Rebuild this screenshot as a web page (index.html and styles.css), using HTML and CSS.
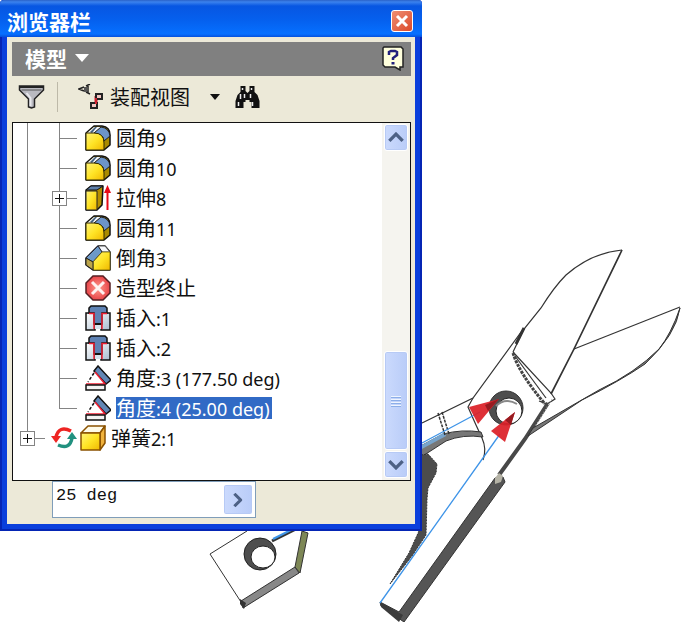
FILE: index.html
```html
<!DOCTYPE html>
<html lang="zh-CN">
<head>
<meta charset="utf-8">
<meta name="viewport" content="width=device-width, initial-scale=1">
<title>浏览器栏</title>
<link rel="stylesheet" href="styles.css">
</head>
<body>
<svg class="defs" width="0" height="0" aria-hidden="true">
  <defs>
    <linearGradient id="gold" x1="0" y1="0" x2="1" y2="1"><stop offset="0" stop-color="#fff37a"/><stop offset=".5" stop-color="#ffe426"/><stop offset="1" stop-color="#f0b800"/></linearGradient>
    <linearGradient id="steel" x1="0" y1="0" x2="1" y2="1"><stop offset="0" stop-color="#fff"/><stop offset="1" stop-color="#a9bdd0"/></linearGradient>
    <radialGradient id="red"><stop offset="0" stop-color="#ff9a8c"/><stop offset="1" stop-color="#e8464a"/></radialGradient>
    <symbol id="fillet" viewBox="0 0 26 26">
      <path d="M1 8 9 1h8q8 1 8 9v10l-6 5H1Z" fill="#a98a00" stroke="#111" stroke-width="1.5" stroke-linejoin="round"/>
      <path d="M2 8 9 2h7L9 8Z" fill="#f4f8fc"/>
      <path d="M5 7 10 2h2L7 8Z" fill="#47627f"/>
      <path d="M9 8 16 2q8 1 9 9l-6 5q0-7-10-8Z" fill="#6c94c8" stroke="#222" stroke-width="1"/>
      <path d="M1 8h8q10 0 10 10v7H1Z" fill="url(#gold)" stroke="#332b00" stroke-width="1"/>
    </symbol>
    <symbol id="extrude" viewBox="0 0 26 26">
      <path d="M1 5 6 1h12l-1 19-5 5H1Z" fill="#b58f00" stroke="#111" stroke-width="1.5" stroke-linejoin="round"/>
      <path d="M1 5 6 1h12l-6 4Z" fill="#5e80aa" stroke="#111"/>
      <path d="M1 6h11v19H1Z" fill="url(#gold)" stroke="#222"/>
      <path d="M22.500 25V5" stroke="#e80b16" stroke-width="2"/><path d="m19 8 3.500-8L26 8Z" fill="#e80b16"/>
    </symbol>
    <symbol id="chamfer" viewBox="0 0 26 26">
      <path d="M1 13 13 1h7l5 6v18H8l-7-5Z" fill="#c7a000" stroke="#111" stroke-width="1.500" stroke-linejoin="round"/>
      <path d="M13 1h7l5 6h-8Z" fill="#f6f8fb" stroke="#555"/>
      <path d="m1 13 12-12 4 6L8 17Z" fill="#6d99c7" stroke="#223" />
      <path d="m8 17 9-10h8v18H8Z" fill="url(#gold)" stroke="#5f5200" stroke-width=".7"/>
      <path d="m1 13 7 4v8l-7-5Z" fill="#bca54a" stroke="#222"/>
    </symbol>
    <symbol id="stop" viewBox="0 0 26 26">
      <path d="M8 1h10l7 7v10l-7 7H8l-7-7V8Z" fill="url(#red)" stroke="#552023" stroke-width="1.500"/>
      <path d="m7 7 12 12M19 7 7 19" stroke="#fff" stroke-width="3" opacity=".9"/>
    </symbol>
    <symbol id="insert" viewBox="0 0 26 26">
      <path d="M1 8h9v17H1ZM16 8h9v17h-9Z" fill="url(#steel)" stroke="#111" stroke-width="1.500"/>
      <path d="M4 3 6 1h14l2 2v5h-5v11H9V8H4Z" fill="#5e82b4" stroke="#111" stroke-width="1.500"/>
      <path d="M4 8.500h5V24M22 8.500h-5V24" fill="none" stroke="#ef2035" stroke-width="1.500"/>
      <path d="M10 20h6v4h-6Z" fill="#d4e2ed"/><path d="M10 19h6" stroke="#111" stroke-width="2"/>
    </symbol>
    <symbol id="angle" viewBox="0 0 26 26">
      <path d="m9 6 4-5 13 14-5 4Z" fill="#6287b5" stroke="#111" stroke-width="1.500"/>
      <path d="M10 7 2 19h17Z" fill="#fff"/><path d="m9 8-6 9" stroke="#111" stroke-width="1.500" stroke-dasharray="3 2"/>
      <path d="m10 7 10 12H1" fill="none" stroke="#ef2035" stroke-width="1.500"/>
      <path d="M1 20h19v5H1Z" fill="#f3f3f3" stroke="#111" stroke-width="1.500"/>
    </symbol>
    <symbol id="cube" viewBox="0 0 26 26">
      <path d="m1 8 7-7h17l-5 7Z" fill="#fffbe8" stroke="#8a5200" stroke-width="1.500" stroke-linejoin="round"/>
      <path d="m20 8 5-7v17l-5 7Z" fill="#f0b23c" stroke="#8a5200" stroke-width="1.500" stroke-linejoin="round"/>
      <path d="M1 8h19v17H1Z" fill="url(#gold)" stroke="#8a5200" stroke-width="1.500" stroke-linejoin="round"/>
    </symbol>
    <symbol id="cycle" viewBox="0 0 26 22">
      <path d="M20 4Q8-2 5 10" fill="none" stroke="#ee2422" stroke-width="3.500"/><path d="m0 9 10 0-5 7Z" fill="#ee2422"/>
      <path d="M7 18q12 5 14-7" fill="none" stroke="#21917f" stroke-width="3.500"/><path d="m16 12 5-7 5 7Z" fill="#21917f"/>
    </symbol>
    <symbol id="chevron" viewBox="0 0 12 8"><path d="m1 6.500 5-5 5 5" fill="none" stroke="#4d6185" stroke-width="2.500"/></symbol>
  </defs>
</svg>

<main class="workspace">
  <svg class="model" viewBox="0 0 681 622" role="img" aria-label="剪刀模型">
    <g fill="none" stroke="#333" stroke-width="1.200">
      <path d="M622 250q-31 3-56 25-12 12-25 33l-17 21-11 23"/>
      <path d="M622 250 574 349l-23 45" stroke-width="1.700"/>
      <path d="m574 349 106-42"/>
      <path d="m524 328-51 70-51 25" />
      <path d="m524 328-8 16" stroke-width="3"/>
      <path d="m513 352 38 41 4 6-8 5-8-3"/>
      <path d="m515 356 31 42" />
      <path d="M513 353q6 20 32 51" stroke-width="3" stroke="#444" stroke-dasharray="3 1"/>
      <path d="m548 403-23 36-26 36" stroke-width="4" stroke="#484848"/>
      <path d="m552 399-20 33" stroke="#bbb" stroke-dasharray="1 2"/>
      <path d="m473 398-5 9 8 18 6 13q5 11 1 22"/>
    </g>
    <path d="M680 308q-4 27-35 56-25 17-63 36l-54 36 5-8 66-38q36-17 60-41 12-15 21-41Z" fill="#777" stroke="#333"/>
    <path d="m495 478 8-1 2 5-101 140-23-16-1-4 19 10Z" fill="#555" stroke="#333"/>
    <path d="m380 602 1 5 18 15 4-7Z" fill="#3b3b3b"/>
    <path d="m495 478 4-5 4 3-2 6-6 2Z" fill="#b5b3a6"/>
    <path d="m415 449 28-15q19-5 38-2l2 5q-20-3-37 4l-31 20Z" fill="#777" stroke="#333"/>
    <path d="m420 446 25-14 1 4-26 14Z" fill="#77a4cc"/>
    <path d="m438 413 7 22m-3-23 7 22" stroke="#333" stroke-width="1.500" stroke-dasharray="3 1"/>
    <path d="m421 455 7-1 9 10-1 9-8 15-1 11-1 36-14 21-22 28 19-31 10-22Z" fill="#4c4c4c" stroke="#333" stroke-dasharray="2 1"/>
    <path d="m422 443 58-31M380 603l120-169" stroke="#3e94e8" stroke-width="1.300" fill="none"/>
    <ellipse cx="506" cy="408" rx="17" ry="17" fill="#4e4e4e" stroke="#333"/>
    <ellipse cx="509" cy="411" rx="13" ry="13" fill="#fff" stroke="#222"/>
    <path d="M496 406q9-9 21-2" fill="none" stroke="#888" stroke-width="2"/>
    <path d="m469 407 30-8-21 25ZM515 412l-24 19 14 11Z" fill="#dc2028" opacity=".93"/>
    <path d="m499 399-14 6 3 6ZM515 412l-10 8 6 5Z" fill="#981b20"/>
    <path d="m247 531-37 23 31 48" fill="none" stroke="#333"/>
    <path d="m241 601 54-34 4 6-56 35Z" fill="#888" stroke="#333"/>
    <path d="m240 599 6 4-2 6-4-5Z" fill="#333"/>
    <path d="m302 531 6 2-8 40-5-6Z" fill="#7d8756" stroke="#333"/>
    <ellipse cx="260" cy="554" rx="16" ry="16" fill="#4e4e4e" stroke="#222"/>
    <ellipse cx="263" cy="557" rx="12" ry="11" fill="#fff" stroke="#222"/>
    <path d="m272 541 24-12" stroke="#333" stroke-width="3"/><path d="m273 539 20-10" stroke="#3e94e8" stroke-width="2"/>
  </svg>

  <section class="window" aria-labelledby="title">
    <header class="titlebar">
      <h1 id="title">浏览器栏</h1>
      <button class="close" type="button" aria-label="关闭"><svg viewBox="0 0 20 20"><path d="m5 5 10 10M15 5 5 15" stroke="#fff" stroke-width="3"/></svg></button>
    </header>
    <div class="content">
      <div class="modelbar">
        <span class="picker picker-model">
          <select aria-label="面板"><option>模型</option></select>
          <svg viewBox="0 0 14 8"><path d="M0 0h14L7 8Z" fill="#fff"/></svg>
        </span>
        <button class="help" type="button" aria-label="帮助"><svg viewBox="0 0 22 25"><path d="M2 1h17l2 2v18h-3v3l-5-3H3l-2-2V2Z" fill="#ffffdc" stroke="#222" stroke-width="1.500"/><path d="M7 9V6l2-1h4l2 1v3l-4 3v2" fill="none" stroke="#22207c" stroke-width="2.500"/><path d="M9.500 16h3v2.500h-3Z" fill="#22207c"/></svg></button>
      </div>
      <div class="toolbar">
        <button class="tool" type="button" aria-label="过滤器"><svg viewBox="0 0 26 24"><path d="M1 1h24v4l-9 9v8l-3 1-3-1v-8L1 5Z" fill="#b9b9c0" stroke="#222" stroke-width="1.500"/><path d="M1 2h24" stroke="#222" stroke-width="2"/><path d="M3 5h20" stroke="#555" stroke-width="1"/><path d="m8 8 4 5v8" fill="none" stroke="#e8e8ec" stroke-width="2"/></svg></button>
        <span class="separator"></span>
        <svg class="view-icon" viewBox="0 0 26 26" aria-hidden="true"><path d="M12 0 8 2M6 3 1 5l5 2m2 1 4 2M10 2v7" fill="none" stroke="#222" stroke-width="1.500"/><path d="M6 3h3v5H6Z" fill="#555"/><path d="M18 12v10" fill="none" stroke="#cf2030" stroke-width="3"/><path d="M18 10h6v5h-6ZM13 19h6v5h-6Z" fill="#f2c7c3" stroke="#222" stroke-width="2"/><path d="M18 14v6" stroke="#cf2030" stroke-width="2"/></svg>
        <span class="picker picker-view">
          <select aria-label="视图"><option>装配视图</option></select>
          <svg viewBox="0 0 10 6"><path d="M0 0h10L5 6Z" fill="#111"/></svg>
        </span>
        <button class="tool" type="button" aria-label="查找"><svg viewBox="0 0 26 24"><path d="M6 1h5v5l2 2 2-2V1h5v6l3 3 2 6v7h-8v-6h-2v-2h-4v2H9v6H1v-7l2-6 3-3Z" fill="#111"/><path d="M8 3v2M17 3v2M6 9v5M10 9v4M16 9v4M4 17v4M18 17v4" stroke="#eee" stroke-width="1.500"/></svg></button>
      </div>
      <div class="browser">
        <ul class="tree" role="tree">
          <li role="treeitem"><span class="guide"></span><span class="branch"></span><svg><use href="#fillet"/></svg><span class="label">圆角<span class="latin">9</span></span></li>
          <li role="treeitem"><span class="guide"></span><span class="branch"></span><svg><use href="#fillet"/></svg><span class="label">圆角<span class="latin">10</span></span></li>
          <li role="treeitem" aria-expanded="false"><span class="guide"></span><span class="branch"><button class="expand" type="button" aria-label="展开"></button></span><svg><use href="#extrude"/></svg><span class="label">拉伸<span class="latin">8</span></span></li>
          <li role="treeitem"><span class="guide"></span><span class="branch"></span><svg><use href="#fillet"/></svg><span class="label">圆角<span class="latin">11</span></span></li>
          <li role="treeitem"><span class="guide"></span><span class="branch"></span><svg><use href="#chamfer"/></svg><span class="label">倒角<span class="latin">3</span></span></li>
          <li role="treeitem"><span class="guide"></span><span class="branch"></span><svg><use href="#stop"/></svg><span class="label">造型终止</span></li>
          <li role="treeitem"><span class="guide"></span><span class="branch"></span><svg><use href="#insert"/></svg><span class="label">插入<span class="latin">:1</span></span></li>
          <li role="treeitem"><span class="guide"></span><span class="branch"></span><svg><use href="#insert"/></svg><span class="label">插入<span class="latin">:2</span></span></li>
          <li role="treeitem"><span class="guide"></span><span class="branch"></span><svg><use href="#angle"/></svg><span class="label">角度<span class="latin">:3 (177.50 deg)</span></span></li>
          <li role="treeitem" aria-selected="true"><span class="guide"></span><span class="branch last"></span><svg><use href="#angle"/></svg><span class="label selected">角度<span class="latin">:4 (25.00 deg)</span></span></li>
          <li role="treeitem" aria-expanded="false"><span class="branch root last"><button class="expand" type="button" aria-label="展开"></button></span><svg><use href="#cycle"/></svg><svg><use href="#cube"/></svg><span class="label">弹簧<span class="latin">2:1</span></span></li>
        </ul>
        <div class="scrollbar">
          <button type="button" aria-label="向上滚动"><svg><use href="#chevron"/></svg></button>
          <div class="track"><div class="thumb"><i></i><i></i><i></i><i></i></div></div>
          <button class="down" type="button" aria-label="向下滚动"><svg><use href="#chevron"/></svg></button>
        </div>
      </div>
      <form class="value">
        <input type="text" value="25 deg" aria-label="角度值">
        <button type="button" aria-label="更多"><svg><use href="#chevron"/></svg></button>
      </form>
    </div>
  </section>
</main>
</body>
</html>
```
FILE: styles.css
```css
* { box-sizing: border-box; }

body {
  margin: 0;
  background: #fff;
  color: #111;
  font: 20px/24px "Noto Sans CJK SC", sans-serif;
}

button, select, input { margin: 0; padding: 0; border: 0; font: inherit; color: inherit; }
button { display: flex; align-items: center; justify-content: center; background: none; }
.defs { position: absolute; }

.workspace { display: grid; min-height: 100vh; overflow: hidden; }
.model, .window { grid-area: 1 / 1; align-self: start; }
.model { display: block; width: 100%; height: auto; }

.window {
  z-index: 1;
  width: 62%;
  min-width: 320px;
  padding: 0 7px 7px;
  border-radius: 4px 4px 0 0;
  background: #0a3fdc;
  box-shadow: inset 2px 0 #0525b4, inset -2px -2px #0525b4;
}

.titlebar {
  display: flex;
  align-items: center;
  justify-content: space-between;
  height: 37px;
  margin: 0 -7px;
  padding: 4px 9px 0 7px;
  border-radius: 4px 4px 0 0;
  background: linear-gradient(#2a62c8, #3b82ee 2px, #0756e2 6px, #0560ee 20px, #0670ff 34px, #0450dc);
}

h1 { margin: 0; color: #fff; font-size: 21px; line-height: 24px; font-weight: 700; }

.close {
  width: 22px;
  height: 22px;
  border: 1px solid #fff;
  border-radius: 3px;
  background: linear-gradient(135deg, #ee8e72, #dc4a2b);
}
.close svg { width: 20px; height: 20px; }

.content { padding: 5px 4px 6px 5px; background: #ece9d8; }

.modelbar {
  display: flex;
  align-items: center;
  justify-content: space-between;
  height: 34px;
  padding: 0 7px 2px 13px;
  background: #808080;
}

.picker { position: relative; display: flex; align-items: center; }
.picker select { width: 100%; appearance: none; background: transparent; outline: 0; }
.picker svg { position: absolute; right: 0; pointer-events: none; }
.picker-model { width: 64px; color: #fff; font-size: 21px; font-weight: 700; }
.picker-model svg { width: 14px; height: 8px; }
.picker-view { width: 110px; margin: 0 14px 0 6px; }
.picker-view svg { width: 10px; height: 6px; }
.help svg { width: 22px; height: 25px; }

.toolbar { display: flex; align-items: center; height: 46px; padding: 0 6px 4px; }
.tool svg { display: block; width: 27px; height: 24px; }
.separator { width: 1px; height: 30px; margin: 0 20px 0 12px; background: #bdb9a8; }
.view-icon { width: 26px; height: 26px; }

.browser { display: flex; min-height: 359px; border: 1px solid #111; background: #fff; }
.tree { flex: 1; min-width: 0; margin: 0; padding: 0; list-style: none; overflow: hidden; }
.tree li { display: flex; align-items: center; height: 30px; white-space: nowrap; }
.tree svg { flex: none; width: 26px; height: 26px; }
.guide { flex: none; align-self: stretch; width: 32px; margin-left: 14px; border-left: 1px solid #848484; }

.branch { position: relative; flex: none; align-self: stretch; width: 26px; }
.branch::before {
  content: "";
  position: absolute;
  inset: 0 auto 0 0;
  border-left: 1px solid #848484;
}
.branch.last::before { bottom: 15px; }
.branch::after {
  content: "";
  position: absolute;
  top: 15px;
  left: 0;
  width: 18px;
  border-top: 1px solid #848484;
}
.branch.root { width: 24px; margin-left: 14px; }

.expand {
  position: absolute;
  z-index: 1;
  top: 8px;
  left: -7px;
  width: 15px;
  height: 15px;
  border: 1px solid #848484;
  background:
    linear-gradient(#111, #111) center / 9px 1px no-repeat,
    linear-gradient(#111, #111) center / 1px 9px no-repeat,
    #fff;
}

.label { margin-left: 5px; padding-right: 2px; line-height: 22px; }
.root ~ svg + svg { margin-left: 3px; }
.latin { font-family: "Noto Sans", sans-serif; font-size: 18px; }
.selected { height: 22px; background: #316ac5; color: #fff; }

.scrollbar { display: flex; flex-direction: column; width: 28px; padding: 1px 2px 2px; background: #f5f4ef; }
.scrollbar button, .thumb, .value button {
  border: 1px solid #fff;
  border-radius: 3px;
  background: linear-gradient(90deg, #cbdafd, #b9ccf8);
  box-shadow: inset 0 0 0 1px #b7caf5;
}
.scrollbar button { flex: none; height: 27px; }
.scrollbar button svg { width: 16px; height: 11px; }
.scrollbar .down svg { transform: rotate(180deg); }
.track { display: flex; flex: 1; flex-direction: column; justify-content: flex-end; padding-bottom: 1px; }
.thumb {
  display: flex;
  flex-direction: column;
  align-items: center;
  justify-content: center;
  gap: 2px;
  height: 33%;
}
.thumb i { width: 10px; height: 1px; background: #eef4fe; box-shadow: 0 1px #8caee8; }

.value {
  display: flex;
  width: 51%;
  height: 37px;
  margin-left: 40px;
  padding: 2px;
  border: 1px solid #7f9db9;
  background: #fff;
}
.value input {
  flex: 1;
  min-width: 0;
  height: 24px;
  padding-left: 1px;
  outline: 0;
  background: transparent;
  font: 17px/24px "Liberation Mono", monospace;
}
.value button { flex: none; width: 30px; }
.value svg { width: 15px; height: 10px; transform: rotate(90deg); }
```
